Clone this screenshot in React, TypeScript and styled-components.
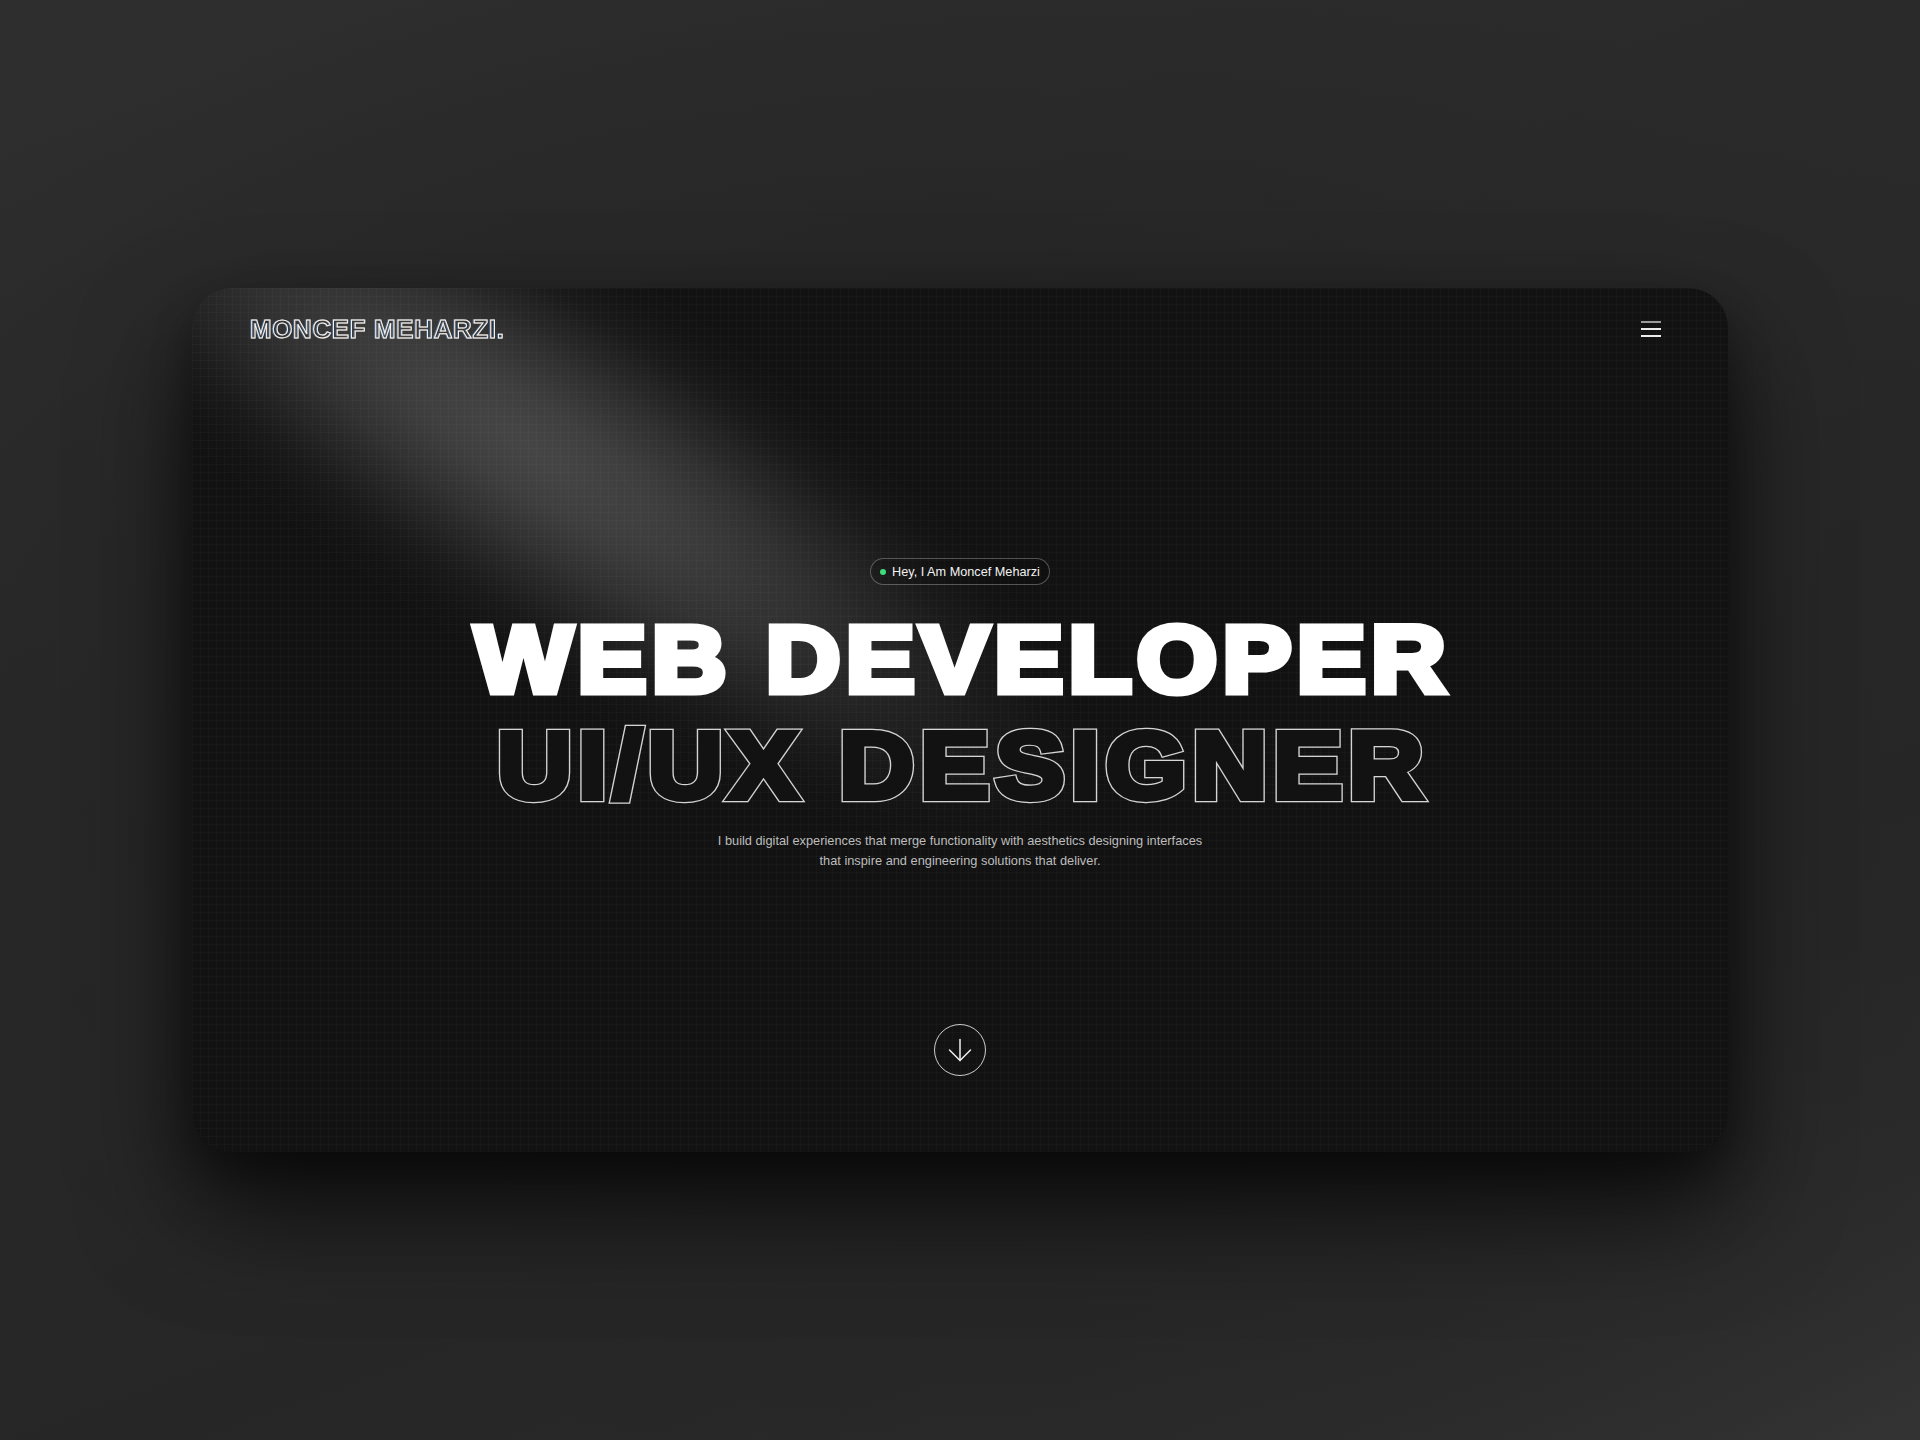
import React from "react";
import styled, { createGlobalStyle } from "styled-components";

const GlobalStyle = createGlobalStyle`
  html, body {
    margin: 0;
    padding: 0;
    background: #272727;
  }
  body {
    font-family: "Liberation Sans", Arial, sans-serif;
  }
  * { box-sizing: border-box; }
`;

const Page = styled.div`
  width: 100%;
  min-height: 1440px;
  display: flex;
  align-items: center;
  justify-content: center;
  background:
    radial-gradient(ellipse 70% 60% at 50% 55%, #1f1f1f 0%, #262626 55%, rgba(38,38,38,0) 100%),
    linear-gradient(160deg, #2e2e2e 0%, #292929 45%, #262626 70%, #333333 100%);
`;

const Card = styled.section`
  position: relative;
  width: 1536px;
  height: 864px;
  border-radius: 40px;
  overflow: hidden;
  display: flex;
  flex-direction: column;
  background-color: #121212;
  background-image:
    linear-gradient(rgba(255, 255, 255, 0.018) 1px, transparent 1px),
    linear-gradient(90deg, rgba(255, 255, 255, 0.018) 1px, transparent 1px);
  background-size: 8px 8px;
  box-shadow: 0 55px 110px rgba(0, 0, 0, 0.7), 0 20px 40px rgba(0, 0, 0, 0.3);
`;

const Beam = styled.div`
  position: absolute;
  left: -300px;
  top: -10px;
  width: 1280px;
  height: 340px;
  transform: rotate(33deg);
  background: radial-gradient(
    ellipse closest-side,
    rgba(255, 255, 255, 0.24) 0%,
    rgba(255, 255, 255, 0.16) 40%,
    rgba(255, 255, 255, 0.06) 75%,
    rgba(255, 255, 255, 0) 100%
  );
  filter: blur(26px);
  pointer-events: none;
`;

const Header = styled.header`
  position: relative;
  z-index: 1;
  height: 82px;
  flex: none;
  display: flex;
  align-items: center;
  justify-content: space-between;
  padding: 0 67px 0 58px;
`;

const Logo = styled.div`
  font-family: "Liberation Sans", Arial, sans-serif;
  font-weight: 700;
  font-size: 26px;
  letter-spacing: 0.6px;
  color: transparent;
  -webkit-text-stroke: 1px #f4f4f4;
  filter: drop-shadow(0.8px 0 0 rgba(255, 150, 60, 0.45)) drop-shadow(-0.8px 0 0 rgba(90, 170, 255, 0.45));
  line-height: 1;
`;

const Burger = styled.button`
  width: 20px;
  padding: 0;
  border: 0;
  background: none;
  display: flex;
  flex-direction: column;
  gap: 5.5px;
  cursor: pointer;
`;

const BurgerLine = styled.span<{ $dim?: boolean }>`
  display: block;
  height: 1.5px;
  width: 100%;
  background: ${(p) => (p.$dim ? "#9a9a9a" : "#ececec")};
`;

const Hero = styled.main`
  position: relative;
  z-index: 1;
  display: flex;
  flex-direction: column;
  align-items: center;
  padding-top: 188px;
`;

const Badge = styled.div`
  height: 27px;
  display: inline-flex;
  align-items: center;
  gap: 6px;
  padding: 0 9px 0 9px;
  border: 1px solid rgba(255, 255, 255, 0.28);
  border-radius: 999px;
  font-size: 12.7px;
  color: #f2f2f2;
  background: rgba(0, 0, 0, 0.15);
`;

const Dot = styled.span`
  width: 6px;
  height: 6px;
  border-radius: 50%;
  background: #3fdc7c;
`;

const Title = styled.h1`
  margin: 22px 0 0;
  font-family: "Liberation Sans", Arial, sans-serif;
  font-weight: 700;
  font-size: 94px;
  line-height: 106px;
  text-align: center;
  transform: scaleX(1.1);
`;

const FilledLine = styled.span`
  display: block;
  color: #ffffff;
  letter-spacing: 4.8px;
  padding-left: 4.8px;
  -webkit-text-stroke: 7px #ffffff;
`;

const OutlineLine = styled.span`
  position: relative;
  display: block;
  letter-spacing: 5.7px;
  padding-left: 5.7px;
  color: #121212;
  -webkit-text-stroke: 8.4px rgba(255, 255, 255, 0.82);

  &::after {
    content: attr(data-text);
    position: absolute;
    inset: 0;
    padding-left: 5.7px;
    color: #121212;
    -webkit-text-stroke: 6px #121212;
  }
`;

const Lead = styled.p`
  margin: 12px 0 0;
  max-width: 495px;
  font-size: 12.8px;
  line-height: 20px;
  color: #bdbdbd;
  text-align: center;
`;

const Footer = styled.footer`
  position: relative;
  z-index: 1;
  margin-top: auto;
  padding-bottom: 76px;
  display: flex;
  justify-content: center;
`;

const ScrollButton = styled.button`
  width: 52px;
  height: 52px;
  border-radius: 50%;
  border: 1.5px solid rgba(255, 255, 255, 0.78);
  background: transparent;
  display: flex;
  align-items: center;
  justify-content: center;
  padding: 0;
  color: #f0f0f0;
  cursor: pointer;
`;

const ArrowDownIcon = () => (
  <svg width="36" height="36" viewBox="0 0 24 24" fill="none" stroke="currentColor" strokeWidth="1" strokeLinecap="round" strokeLinejoin="round">
    <path d="M12 5v14" />
    <path d="m19 12-7 7-7-7" />
  </svg>
);

export default function App() {
  return (
    <>
      <GlobalStyle />
      <Page>
        <Card>
          <Beam />
          <Header>
            <Logo>MONCEF MEHARZI.</Logo>
            <Burger aria-label="Menu">
              <BurgerLine $dim />
              <BurgerLine />
              <BurgerLine />
            </Burger>
          </Header>
          <Hero>
            <Badge>
              <Dot />
              Hey, I Am Moncef Meharzi
            </Badge>
            <Title>
              <FilledLine>WEB DEVELOPER</FilledLine>
              <OutlineLine data-text="UI/UX DESIGNER">UI/UX DESIGNER</OutlineLine>
            </Title>
            <Lead>
              I build digital experiences that merge functionality with aesthetics designing interfaces that inspire and engineering solutions that deliver.
            </Lead>
          </Hero>
          <Footer>
            <ScrollButton aria-label="Scroll down">
              <ArrowDownIcon />
            </ScrollButton>
          </Footer>
        </Card>
      </Page>
    </>
  );
}
